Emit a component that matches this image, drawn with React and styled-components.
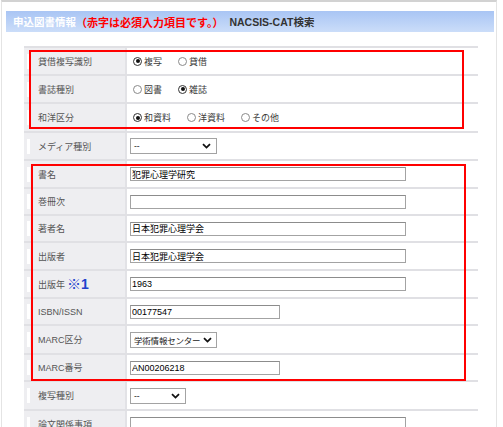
import React from 'react'
import styled, { createGlobalStyle } from 'styled-components'

const GlobalStyle = createGlobalStyle`
  body {
    margin: 0;
    background: #fff;
    font-family: "Liberation Sans", "Noto Sans CJK JP", sans-serif;
  }
`

const Panel = styled.div`
  box-sizing: border-box;
  width: 496px;
  height: 427px;
  margin-left: 1px;
  border: 1px solid #e4e4e4;
  border-top: 2px solid #d2d2d2;
  border-bottom: none;
  padding: 9px 1px 0 4px;
  overflow: hidden;
`

const Header = styled.div`
  height: 21px;
  margin-right: 1px;
  padding-left: 7px;
  display: flex;
  align-items: center;
  background: linear-gradient(#a9c5f4, #cbddf9);
  font-size: 10.5px;
  font-weight: bold;
`

const HeadText = styled.span`
  color: ${p => p.$color};
  margin-left: ${p => p.$gap || 0}px;
  font-size: ${p => p.$size || 10.5}px;
`

const Table = styled.div`
  width: 454px;
  margin: 14px 0 0 18px;
  border-top: 2px solid #e0e0e4;
`

const Group = styled.div`
  position: relative;

  &::after {
    content: '';
    display: ${p => (p.$box ? 'block' : 'none')};
    position: absolute;
    top: ${p => p.$box?.[0]}px;
    right: ${p => p.$box?.[1]}px;
    bottom: ${p => p.$box?.[2]}px;
    left: ${p => p.$box?.[3]}px;
    border: 2px solid #ff0000;
    pointer-events: none;
  }
`

const Row = styled.div`
  box-sizing: border-box;
  height: ${p => p.$h}px;
  display: grid;
  grid-template-columns: 103px 1fr;
  border-bottom: 2px solid #e0e0e4;
`

const Label = styled.div`
  display: flex;
  align-items: center;
  padding-left: 3px;
  background: #eeeef1;
  border-right: 2px solid #e2e2e6;
  color: #555;
  font-size: 9px;
  white-space: nowrap;
`

const Marker = styled.span`
  width: 3px;
  height: 15px;
  margin-right: 8px;
  background: #fff;
`

const Note = styled.span`
  margin-left: 2px;
  color: #2142cc;
  font-size: 14px;
  font-weight: bold;
  line-height: 1;
`

const Value = styled.div`
  display: flex;
  align-items: center;
  padding-left: 3px;
`

const RadioItem = styled.span`
  display: flex;
  align-items: center;
  margin-left: 3px;
  margin-right: 13px;
  color: #3a3a3a;
  font-size: 9px;
`

const Circle = styled.span`
  box-sizing: border-box;
  width: 9px;
  height: 9px;
  margin-right: 2px;
  border-radius: 50%;
  border: 1px solid ${p => (p.$on ? '#333' : '#8a8a8a')};
  display: flex;
  align-items: center;
  justify-content: center;

  &::after {
    content: '';
    display: ${p => (p.$on ? 'block' : 'none')};
    width: 4px;
    height: 4px;
    border-radius: 50%;
    background: #111;
  }
`

const Input = styled.input`
  box-sizing: border-box;
  width: ${p => p.$w}px;
  height: 14px;
  padding: 0 1px;
  margin: 0;
  border: 1px solid #a3a3a3;
  border-top-color: #8c8c8c;
  color: #000;
  font-family: "Liberation Sans", "Noto Sans CJK JP", sans-serif;
  font-size: 9px;
  outline: none;
`

const Select = styled.div`
  box-sizing: border-box;
  width: ${p => p.$w}px;
  height: 16px;
  padding: 0 5px 0 3px;
  border: 1px solid #a3a3a3;
  display: flex;
  align-items: center;
  justify-content: space-between;
  gap: 3px;
  color: #222;
  font-size: 8.5px;
  letter-spacing: -0.2px;
  white-space: nowrap;
`

const Chevron = () => (
  <svg width="9" height="6" viewBox="0 0 9 6" style={{ flexShrink: 0 }}>
    <path d="M1 1.2 L4.5 4.6 L8 1.2" fill="none" stroke="#111" strokeWidth="1.8" />
  </svg>
)

const Radio = ({ on, children }) => (
  <RadioItem>
    <Circle $on={on} />
    {children}
  </RadioItem>
)

const Field = ({ label, h = 27, note, children }) => (
  <Row $h={h}>
    <Label>
      <Marker />
      {label}
      {note && <Note>{note}</Note>}
    </Label>
    <Value>{children}</Value>
  </Row>
)

export default function App() {
  return (
    <>
      <GlobalStyle />
      <Panel>
        <Header>
          <HeadText $color="#fff">申込図書情報</HeadText>
          <HeadText $color="#ff0000" $size={11}>（赤字は必須入力項目です。）</HeadText>
          <HeadText $color="#333" $gap={6}>NACSIS-CAT検索</HeadText>
        </Header>
        <Table>
          <Group $box={[2, 14, 4, 5]}>
            <Field label="貸借複写識別" h={28}>
              <Radio on>複写</Radio>
              <Radio>貸借</Radio>
            </Field>
            <Field label="書誌種別" h={28}>
              <Radio>図書</Radio>
              <Radio on>雑誌</Radio>
            </Field>
            <Field label="和洋区分" h={29}>
              <Radio on>和資料</Radio>
              <Radio>洋資料</Radio>
              <Radio>その他</Radio>
            </Field>
          </Group>
          <Field label="メディア種別" h={28}>
            <Select $w={87}>--<Chevron /></Select>
          </Field>
          <Group $box={[3, 12, 1, 7]}>
            <Field label="書名" h={28}>
              <Input $w={276} readOnly defaultValue="犯罪心理学研究" />
            </Field>
            <Field label="巻冊次">
              <Input $w={276} readOnly defaultValue="" />
            </Field>
            <Field label="著者名">
              <Input $w={276} readOnly defaultValue="日本犯罪心理学会" />
            </Field>
            <Field label="出版者" h={28}>
              <Input $w={276} readOnly defaultValue="日本犯罪心理学会" />
            </Field>
            <Field label="出版年" note="※1" h={28}>
              <Input $w={276} readOnly defaultValue="1963" />
            </Field>
            <Field label="ISBN/ISSN">
              <Input $w={150} readOnly defaultValue="00177547" />
            </Field>
            <Field label="MARC区分" h={29}>
              <Select $w={87}>学術情報センター<Chevron /></Select>
            </Field>
            <Field label="MARC番号">
              <Input $w={150} readOnly defaultValue="AN00206218" />
            </Field>
          </Group>
          <Field label="複写種別" h={29}>
            <Select $w={56}>--<Chevron /></Select>
          </Field>
          <Field label="論文関係事項" h={28}>
            <Input $w={276} readOnly defaultValue="" />
          </Field>
        </Table>
      </Panel>
    </>
  )
}
